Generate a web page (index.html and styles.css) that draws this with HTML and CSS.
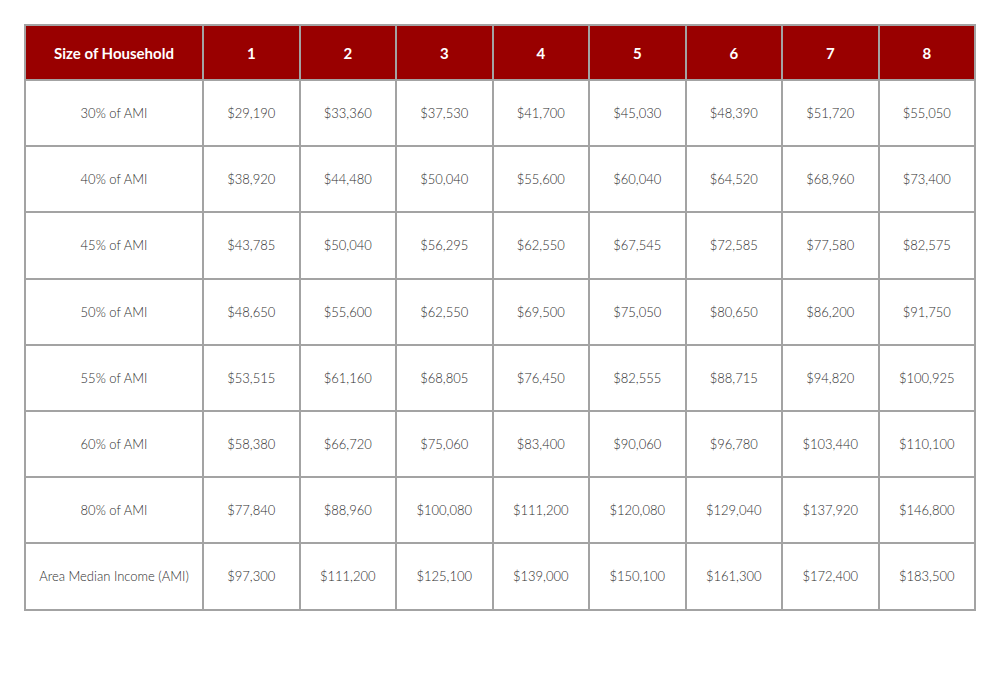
FILE: index.html
```html
<!DOCTYPE html>
<html lang="en">
<head>
<meta charset="utf-8">
<title>Income Limits</title>
<link rel="stylesheet" href="styles.css">
</head>
<body>
<table class="ami">
  <thead>
    <tr>
      <th class="label-col">Size of Household</th>
      <th>1</th><th>2</th><th>3</th><th>4</th><th>5</th><th>6</th><th>7</th><th>8</th>
    </tr>
  </thead>
  <tbody>
    <tr><td>30% of AMI</td><td>$29,190</td><td>$33,360</td><td>$37,530</td><td>$41,700</td><td>$45,030</td><td>$48,390</td><td>$51,720</td><td>$55,050</td></tr>
    <tr><td>40% of AMI</td><td>$38,920</td><td>$44,480</td><td>$50,040</td><td>$55,600</td><td>$60,040</td><td>$64,520</td><td>$68,960</td><td>$73,400</td></tr>
    <tr><td>45% of AMI</td><td>$43,785</td><td>$50,040</td><td>$56,295</td><td>$62,550</td><td>$67,545</td><td>$72,585</td><td>$77,580</td><td>$82,575</td></tr>
    <tr><td>50% of AMI</td><td>$48,650</td><td>$55,600</td><td>$62,550</td><td>$69,500</td><td>$75,050</td><td>$80,650</td><td>$86,200</td><td>$91,750</td></tr>
    <tr><td>55% of AMI</td><td>$53,515</td><td>$61,160</td><td>$68,805</td><td>$76,450</td><td>$82,555</td><td>$88,715</td><td>$94,820</td><td>$100,925</td></tr>
    <tr><td>60% of AMI</td><td>$58,380</td><td>$66,720</td><td>$75,060</td><td>$83,400</td><td>$90,060</td><td>$96,780</td><td>$103,440</td><td>$110,100</td></tr>
    <tr><td>80% of AMI</td><td>$77,840</td><td>$88,960</td><td>$100,080</td><td>$111,200</td><td>$120,080</td><td>$129,040</td><td>$137,920</td><td>$146,800</td></tr>
    <tr><td>Area Median Income (AMI)</td><td>$97,300</td><td>$111,200</td><td>$125,100</td><td>$139,000</td><td>$150,100</td><td>$161,300</td><td>$172,400</td><td>$183,500</td></tr>
  </tbody>
</table>
</body>
</html>
```

FILE: styles.css
```css
html, body {
  margin: 0;
  padding: 0;
  background: #ffffff;
}

body {
  padding: 24px;
  font-family: "Lato", "Open Sans", sans-serif;
}

.ami {
  table-layout: fixed;
  width: 952px;
  border-collapse: separate;
  border-spacing: 0;
  border-left: 2px solid #a3a3a3;
  border-top: 2px solid #a3a3a3;
}

.ami th,
.ami td {
  box-sizing: border-box;
  border-right: 2px solid #a3a3a3;
  border-bottom: 2px solid #a3a3a3;
  text-align: center;
  vertical-align: middle;
  padding: 0;
}

.ami th {
  width: 96.5px;
  height: 55px;
  background: #990000;
  color: #ffffff;
  font-weight: 700;
  font-size: 15px;
}

.ami th.label-col {
  width: 178px;
}

.ami td {
  height: 66.2px;
  color: #2e2e2e;
  font-weight: 300;
  font-size: 13px;
}
```
